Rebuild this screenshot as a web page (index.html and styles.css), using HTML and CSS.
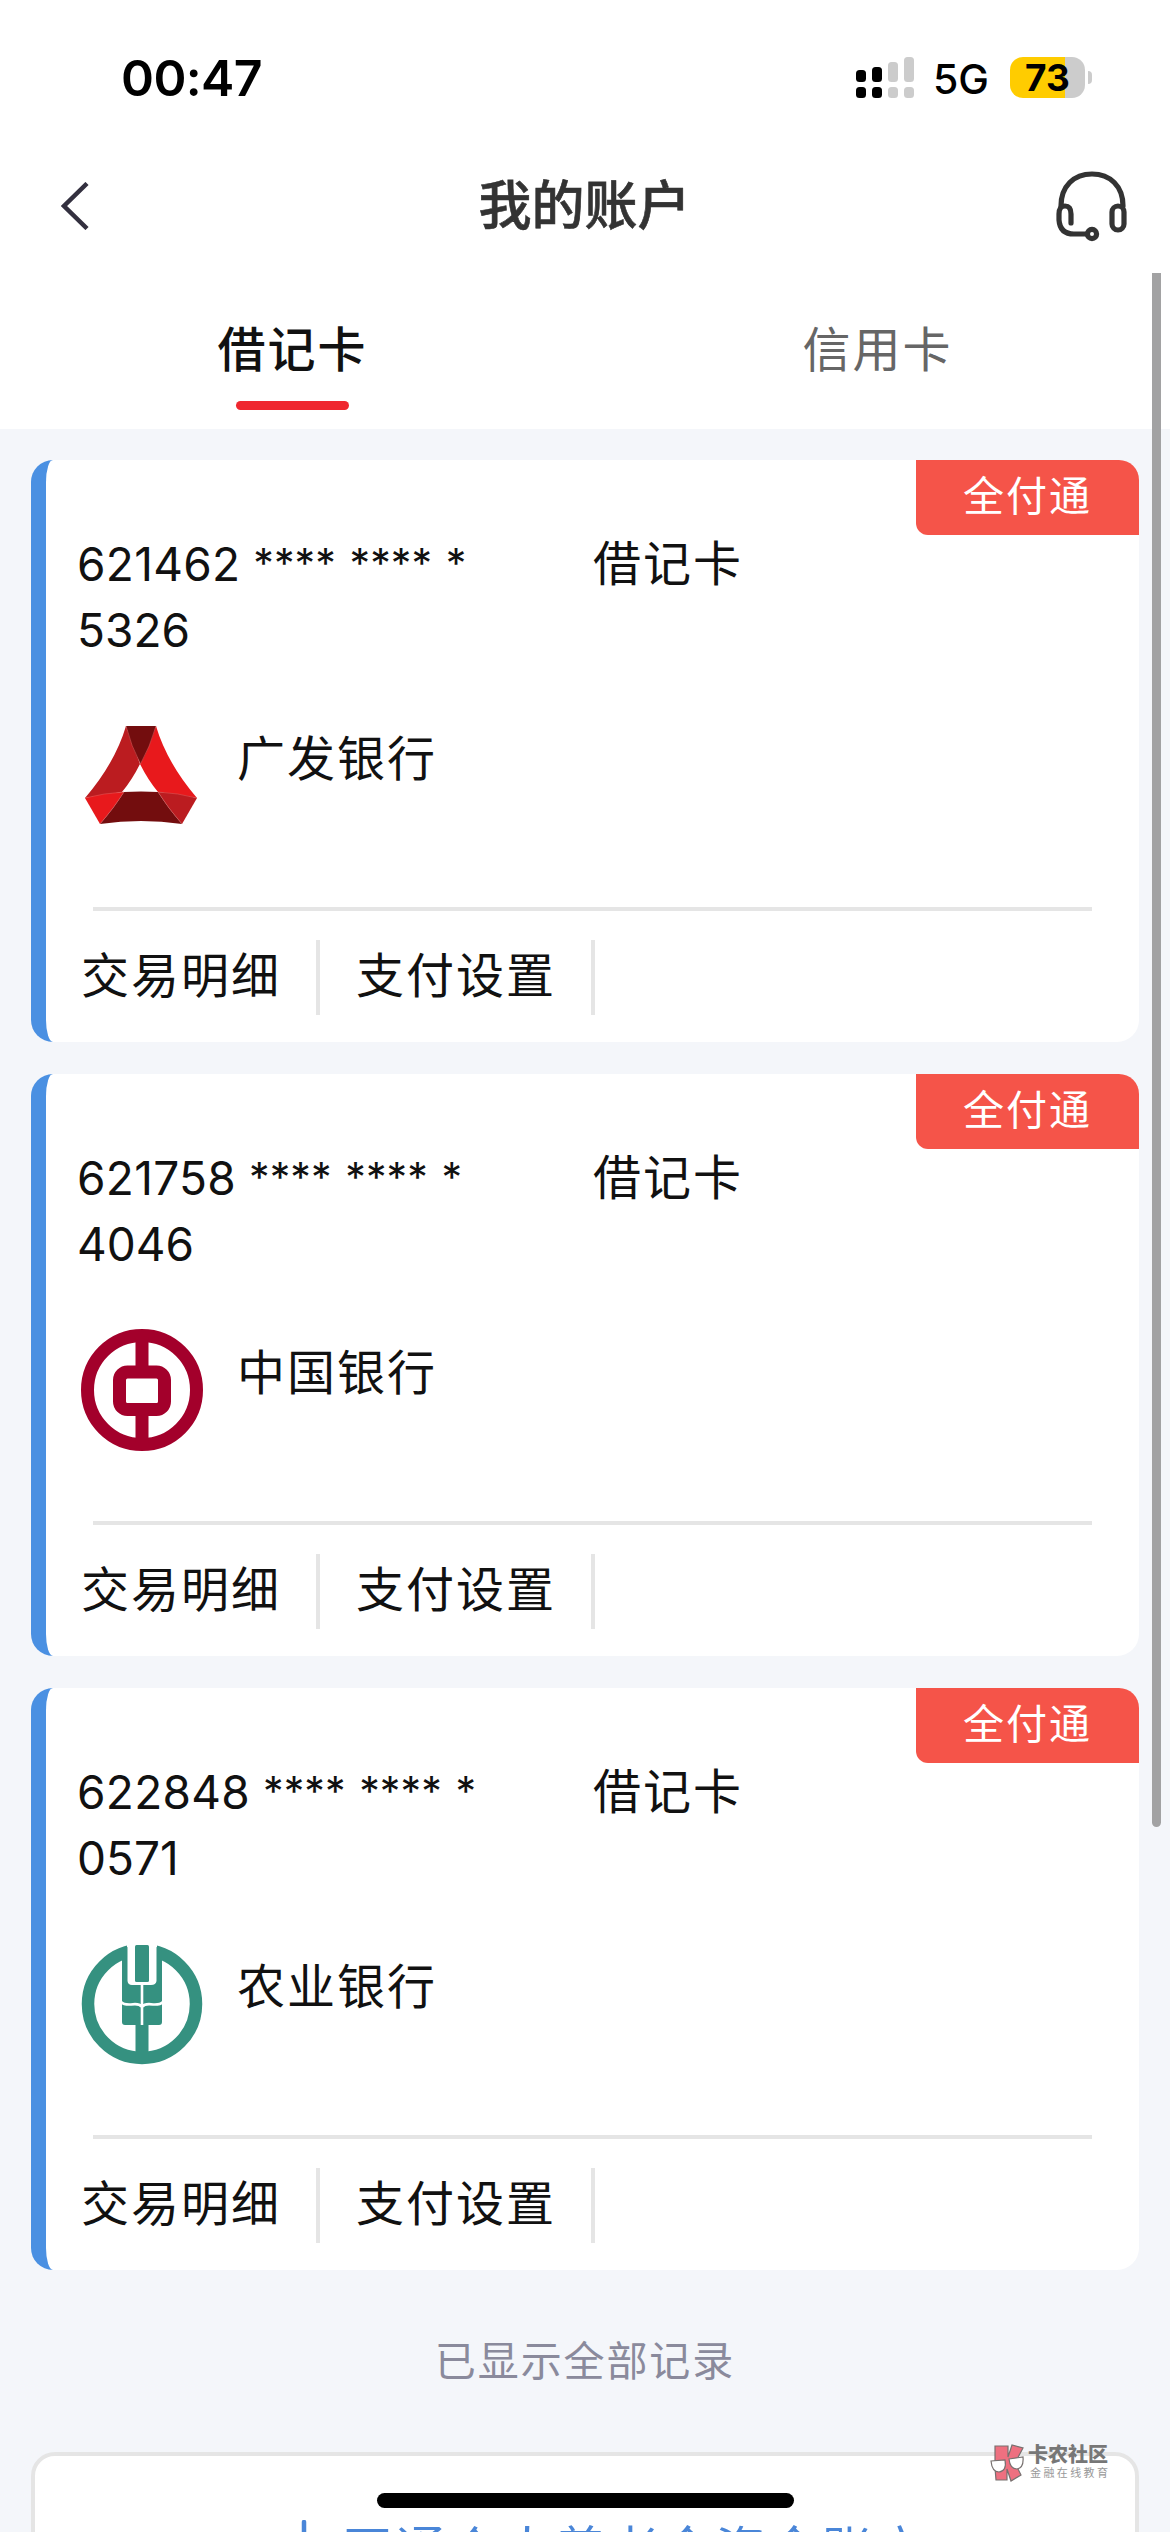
FILE: index.html
```html
<!DOCTYPE html>
<html lang="zh-CN">
<head>
    <meta charset="UTF-8">
    <meta name="viewport" content="width=device-width, initial-scale=1.0">
    <title>我的账户</title>
    <link rel="stylesheet" href="styles.css">
</head>
<body>
    <header class="top">
        <div class="status">
            <span class="time">00:47</span>
            <svg class="signal" width="58" height="42" viewBox="0 0 58 42">
                <g fill="#000">
                    <rect x="0" y="13" width="10" height="12" rx="3.5" />
                    <rect x="16" y="10" width="10" height="15" rx="3.5" />
                    <rect x="0" y="30" width="10" height="11" rx="3.5" />
                    <rect x="16" y="30" width="10" height="11" rx="3.5" />
                </g>
                <g fill="#ccc">
                    <rect x="32" y="5" width="10" height="20" rx="3.5" />
                    <rect x="48" y="0" width="10" height="25" rx="3.5" />
                    <rect x="32" y="30" width="10" height="11" rx="3.5" />
                    <rect x="48" y="30" width="10" height="11" rx="3.5" />
                </g>
            </svg>
            <span class="network">5G</span>
            <div class="battery">73</div>
            <div class="battery-cap"></div>
        </div>
        <div class="navbar">
            <svg class="back" width="28" height="48" viewBox="0 0 28 48">
                <path d="M26 1.5 L3 24 L26 46.5" fill="none" stroke="#33303f" stroke-width="4.5" />
            </svg>
            <h1>我的账户</h1>
            <svg class="service" width="72" height="72" viewBox="0 0 72 72">
                <g fill="none" stroke="#333" stroke-width="5.2" stroke-linecap="round">
                    <path d="M6 36 C6 16 19 4 37 4 S68 16 68 36" />
                    <path d="M16 53 V44 Q16 36 10 36 Q4 36 4 44 V50 Q5 64 19 64 H31" />
                    <rect x="57" y="36" width="12" height="24" rx="6" />
                    <circle cx="37" cy="64" r="4.600" />
                </g>
            </svg>
        </div>
        <div class="tabs">
            <div class="tab active">借记卡</div>
            <div class="tab">信用卡</div>
        </div>
    </header>

    <main class="list">
        <section class="card">
            <div class="badge">全付通</div>
            <div class="info">
                <div class="number"><span class="bin">621462</span> <span class="mask">**** **** *</span><br>5326</div>
                <div class="type">借记卡</div>
            </div>
            <div class="bank">
                <svg class="logo" width="122" height="122" viewBox="0 0 122 122">
                    <path fill="#bb1c20" d="M45 11 Q34 48 4 83 L41 77 Q51 65 59 49 Z" />
                    <path fill="#e8191c" d="M75 11 Q86 48 116 83 L77 77 Q67 65 59 49 Z" />
                    <path fill="#730d0e" d="M45 11 H75 Q69 32 59.500 49 Q50 31 45 11 Z" />
                    <path fill="#e8191c" d="M4 83 Q23 78 43 77 Q33 93 19 109 Z" />
                    <path fill="#bb1c20" d="M116 83 Q97 78 77 77 Q87 93 101 109 Z" />
                    <path fill="#730d0e" d="M43 77 Q60 76 77 77 Q87 93 101 109 Q60 103 19 109 Q33 93 43 77 Z" />
                    <path fill="none" stroke="#e06060" stroke-width=".5" d="M45 11 Q50 31 59.500 49 M77 77 Q87 93 101 109 M75 11 Q69 32 59.500 49 M43 77 Q33 93 19 109 M4 83 Q23 78 43 77 M116 83 Q97 78 77 77" />
                </svg>
                <span class="name">广发银行</span>
            </div>
            <div class="actions">
                <span class="action">交易明细</span>
                <span class="action">支付设置</span>
            </div>
        </section>

        <section class="card">
            <div class="badge">全付通</div>
            <div class="info">
                <div class="number"><span class="bin">621758</span> <span class="mask">**** **** *</span><br>4046</div>
                <div class="type">借记卡</div>
            </div>
            <div class="bank">
                <svg class="logo" width="122" height="122" viewBox="0 0 122 122">
                    <g fill="none" stroke="#a3002b" stroke-width="13">
                        <circle cx="61" cy="61" r="54.500" />
                        <rect x="38.500" y="43" width="45" height="37.500" rx="8" />
                        <path d="M61 8 V43 M61 80 V114" />
                    </g>
                </svg>
                <span class="name">中国银行</span>
            </div>
            <div class="actions">
                <span class="action">交易明细</span>
                <span class="action">支付设置</span>
            </div>
        </section>

        <section class="card">
            <div class="badge">全付通</div>
            <div class="info">
                <div class="number"><span class="bin">622848</span> <span class="mask">**** **** *</span><br>0571</div>
                <div class="type">借记卡</div>
            </div>
            <div class="bank">
                <svg class="logo" width="122" height="122" viewBox="0 0 122 122">
                    <circle cx="61" cy="61" r="54" fill="none" stroke="#359180" stroke-width="12.500" />
                    <path fill="#fff" d="M46 0 H76 V30 H46 Z" />
                    <path fill="#359180" d="M41 6 L46.500 4 V38 Q47 42 51 42 H70 Q75 42 75.500 38 V4 L81 6 V79 Q81 82 78 82 H67.500 V114 H54.500 V82 H44 Q41 82 41 79 Z" />
                    <rect x="54" y="2" width="14" height="37" rx="1.500" fill="#359180" />
                    <path fill="none" stroke="#fff" stroke-width="2.600" d="M61 42 V82 M40 59 Q43 62 50 61.500 Q58 60 61 64 Q64 60 72 61.500 Q79 62 82 59" />
                </svg>
                <span class="name">农业银行</span>
            </div>
            <div class="actions">
                <span class="action">交易明细</span>
                <span class="action">支付设置</span>
            </div>
        </section>

        <p class="end">已显示全部记录</p>

        <div class="pension">
            <svg width="40" height="40" viewBox="0 0 40 40">
                <path d="M20 2 V38 M2 20 H38" stroke="#4a86d8" stroke-width="4.500" stroke-linecap="round" />
            </svg>
            <span>开通个人养老金资金账户</span>
        </div>
    </main>

    <div class="scrollbar"></div>
    <div class="home-bar"></div>
    <div class="watermark">
        <svg width="35" height="38" viewBox="0 0 35 38">
            <g fill="#ee7080" stroke="#77706f" stroke-width="1.200">
                <path d="M5 2 H18 V13 L22 1 L33 4 L25 19 L31 31 L21 37 L17 25 V36 H6 L5 24 Z" />
            </g>
            <g fill="#fff" stroke="#77706f" stroke-width="1.200">
                <path d="M1 17 L15 16 Q17 27 9 28 Q2 28 1 17 Z" />
                <path d="M19 15 L33 13 Q34 24 27 25 Q20 25 19 15 Z" />
            </g>
        </svg>
        <div class="watermark-text">
            <b>卡农社区</b>
            <small>金融在线教育</small>
        </div>
    </div>
</body>
</html>
```
FILE: styles.css
```css
* {
    box-sizing: border-box;
}
body {
    margin: 0;
    width: 1170px;
    height: 2532px;
    overflow: hidden;
    background-color: #f4f6fa;
    color: #111;
    font-family: Inter, "Noto Sans CJK SC", sans-serif;
    font-size: 48px;
    position: relative;
}
.top {
    height: 429px;
    background-color: #fff;
}
.status {
    display: flex;
    align-items: center;
    height: 155px;
    padding-left: 121px;
    color: #000;
}
.time {
    width: 735px;
    font-size: 50px;
    font-weight: 600;
    letter-spacing: -0.6px;
}
.network {
    width: 76px;
    margin-left: 19px;
    font-size: 41px;
    font-weight: 500;
    line-height: 46px;
    padding-top: 3px;
}
.battery {
    width: 75px;
    height: 41px;
    margin-left: 1px;
    border-radius: 13px;
    background: linear-gradient(to right, #fc0 55px, #ccc 55px);
    font-size: 37px;
    font-weight: 700;
    line-height: 41px;
    text-align: center;
}
.battery-cap {
    width: 4px;
    height: 13px;
    margin-left: 3px;
    border-radius: 0 4px 4px 0;
    background-color: #ccc;
}
.navbar {
    display: grid;
    grid-template-columns: 72px 1fr 72px;
    align-items: center;
    height: 102px;
    padding: 0 43px 0 61px;
}
h1 {
    margin: 0;
    padding-right: 19px;
    color: #333;
    font-size: 53px;
    font-weight: 500;
    line-height: 72px;
    text-align: center;
    -webkit-text-stroke: 0.6px #333;
}
.tabs {
    display: flex;
    height: 172px;
    padding-top: 57px;
}
.tab {
    flex: 1;
    display: flex;
    flex-direction: column;
    align-items: center;
    color: #666;
    letter-spacing: 2px;
    line-height: 72px;
}
.active {
    color: #111;
    font-weight: 500;
}
.active::after {
    content: "";
    width: 113px;
    height: 9px;
    margin-top: 15px;
    border-radius: 5px;
    background-color: #ef272f;
}
.list {
    display: flex;
    flex-direction: column;
    gap: 32px;
    padding: 31px 31px 0;
}
.card {
    position: relative;
    height: 582px;
    padding: 71px 47px 0 33px;
    border-left: 15px solid #4a90e2;
    border-radius: 22px;
    background-color: #fff;
}
.badge {
    position: absolute;
    top: 0;
    right: 0;
    width: 223px;
    height: 75px;
    border-radius: 0 20px 0 12px;
    background-color: #f55449;
    color: #fff;
    font-size: 41px;
    letter-spacing: 2px;
    line-height: 72px;
    text-align: center;
}
.info {
    display: flex;
    height: 184px;
    line-height: 66px;
}
.number {
    width: 516px;
    margin-left: -2px;
    font-size: 46px;
    white-space: nowrap;
}
.bin {
    letter-spacing: 0.3px;
}
.mask {
    font-size: 41px;
    letter-spacing: 0.1px;
    word-spacing: 2px;
    line-height: 1;
    vertical-align: 3px;
}
.type,
.name,
.action {
    letter-spacing: 2px;
}
.bank {
    display: flex;
    height: 192px;
    padding-left: 2px;
}
.name {
    margin-left: 34px;
    line-height: 87px;
}
.actions {
    display: flex;
    margin-left: 14px;
    padding-top: 29px;
    border-top: 4px solid #e5e5e5;
}
.action {
    height: 75px;
    margin-left: -12px;
    margin-right: 48px;
    padding-right: 35px;
    border-right: 4px solid #e5e5e5;
    line-height: 72px;
}
.end {
    margin: 35px 0 0;
    color: #8a8a9c;
    font-size: 41px;
    letter-spacing: 1.9px;
    line-height: 48px;
    text-align: center;
}
.pension {
    display: flex;
    justify-content: center;
    height: 200px;
    margin-top: 35px;
    padding-top: 58px;
    padding-left: 43px;
    border: 4px solid #e5e5e5;
    border-radius: 24px;
    background-color: #fff;
    color: #4a86d8;
    font-size: 50px;
    letter-spacing: 3.3px;
    line-height: 72px;
}
.pension svg {
    margin-top: 6px;
    margin-right: 18px;
}
/* layers above the page */
.scrollbar {
    position: absolute;
    top: 273px;
    right: 9px;
    width: 9px;
    height: 1554px;
    border-radius: 0 0 5px 5px;
    background-color: #a2a2a3;
}
.home-bar {
    position: absolute;
    left: 377px;
    bottom: 24px;
    width: 417px;
    height: 15px;
    border-radius: 8px;
    background-color: #000;
}
.watermark {
    position: absolute;
    left: 990px;
    top: 2444px;
    display: flex;
    gap: 3px;
}
.watermark-text {
    display: flex;
    flex-direction: column;
    color: #777;
}
.watermark-text b {
    font-size: 20px;
    font-weight: 900;
    line-height: 23px;
}
.watermark-text small {
    padding-left: 2px;
    color: #999;
    font-size: 11px;
    letter-spacing: 2.4px;
    line-height: 13px;
}
```
